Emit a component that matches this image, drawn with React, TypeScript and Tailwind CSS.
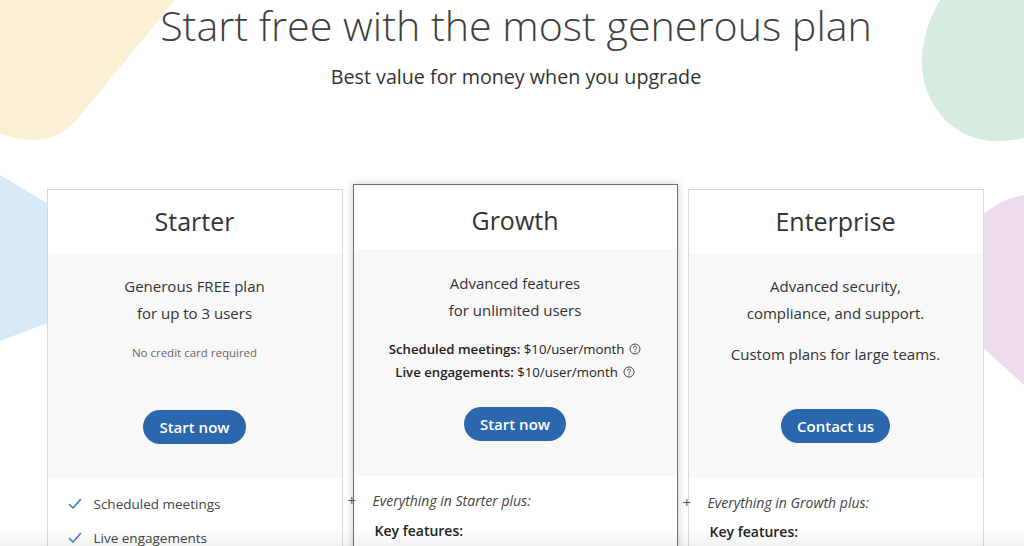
import React from "react";

const font = { fontFamily: '"Open Sans", "Noto Sans", sans-serif' };

function Blobs() {
  return (
    <svg
      className="absolute inset-0 w-[1024px] h-[546px] pointer-events-none"
      viewBox="0 0 1024 546"
      aria-hidden="true"
    >
      <path d="M0 0 L175 0 L80 116 C66 133 50 140 33 140 C20 140 10 137 0 133 Z" fill="#fbf0d4" />
      <path d="M0 175 L90 229 L90 307 L0 341 Z" fill="#d7eaf7" />
      <path d="M940 0 C928 20 921 45 922 65 C924 110 958 141 995 141 C1005 141 1015 140 1024 138 L1024 0 Z" fill="#d6ecdf" />
      <path d="M970 228 C988 207 1005 198 1024 195 L1024 385 L970 336 Z" fill="#ecdcee" />
    </svg>
  );
}

function Check() {
  return (
    <svg width="14" height="12" viewBox="0 0 14 12" className="shrink-0">
      <path d="M1.5 6.5 L5 10 L12.5 1.5" fill="none" stroke="#3b7bc6" strokeWidth="1.6" strokeLinecap="round" strokeLinejoin="round" />
    </svg>
  );
}

function Help() {
  return (
    <svg width="12" height="12" viewBox="0 0 12 12" className="inline-block ml-[5px] -mt-[3px]">
      <circle cx="6" cy="6" r="5" fill="none" stroke="#444" strokeWidth="1" />
      <path d="M4.4 4.7 C4.4 3.7 5.1 3.2 6 3.2 C6.9 3.2 7.6 3.8 7.6 4.6 C7.6 5.6 6.1 5.7 6.1 7" fill="none" stroke="#444" strokeWidth="1" strokeLinecap="round" />
      <circle cx="6.1" cy="8.7" r="0.6" fill="#444" />
    </svg>
  );
}

function Button({ label }: { label: string }) {
  return (
    <button className="h-[34px] px-4 rounded-full bg-[#2b67af] text-white text-[15px] font-semibold leading-none">
      {label}
    </button>
  );
}

function PlusRow({ text }: { text: string }) {
  return (
    <div className="relative pl-[19px] text-[14px] italic text-[#444] leading-[20px]">
      <span className="absolute left-[-6px] top-0 not-italic text-[#555] text-[15px] leading-[19px]">+</span>
      {text}
    </div>
  );
}

export default function App() {
  return (
    <div style={font} className="relative w-[1024px] h-[546px] overflow-hidden bg-white text-[#333]">
      <Blobs />

      <div className="relative flex flex-col items-center pl-[8px]">
        <h1 className="mt-[2px] text-[41.2px] font-light leading-[46px] text-[#3f3f3f]">
          Start free with the most generous plan
        </h1>
        <p className="mt-[16px] text-[19.7px] leading-[26px] text-[#333]">Best value for money when you upgrade</p>

        <div className="mt-[94px] flex items-start gap-[10px] pr-[2px]">
          {/* Starter */}
          <div className="mt-[5px] w-[296px] h-[400px] border border-[#d8d8d8] bg-white">
            <div className="h-[64px] flex items-center justify-center text-[25px] text-[#333]">Starter</div>
            <div className="h-[224px] bg-[#f8f8f8] flex flex-col items-center pt-[19px] text-[15px] leading-[27px]">
              <div>Generous FREE plan</div>
              <div>for up to 3 users</div>
              <div className="mt-[17px] text-[11.5px] leading-[18px] text-[#666]">No credit card required</div>
              <div className="mt-[48px]">
                <Button label="Start now" />
              </div>
            </div>
            <div className="pl-[20px] pt-[17px] flex flex-col gap-[16px] text-[13.5px] leading-[18px] text-[#444]">
              <div className="flex items-center gap-[12px]">
                <Check />
                <span>Scheduled meetings</span>
              </div>
              <div className="flex items-center gap-[12px]">
                <Check />
                <span>Live engagements</span>
              </div>
            </div>
          </div>

          {/* Growth */}
          <div className="w-[325px] h-[420px] border border-[#6f6f6f] bg-white shadow-[0_0_8px_rgba(0,0,0,0.22)]">
            <div className="h-[64px] pt-[8px] flex items-center justify-center text-[25px] text-[#333]">Growth</div>
            <div className="h-[227px] bg-[#f8f8f8] flex flex-col items-center pt-[21px] text-[15px] leading-[27px]">
              <div>Advanced features</div>
              <div>for unlimited users</div>
              <div className="mt-[14px] text-[13.2px] leading-[23px] text-[#222] text-center">
                <div>
                  <span className="font-semibold">Scheduled meetings:</span> $10/user/month
                  <Help />
                </div>
                <div>
                  <span className="font-semibold">Live engagements:</span> $10/user/month
                  <Help />
                </div>
              </div>
              <div className="mt-[23px]">
                <Button label="Start now" />
              </div>
            </div>
            <div className="pt-[15px]">
              <PlusRow text="Everything in Starter plus:" />
              <div className="mt-[10px] pl-[21px] text-[14px] font-semibold leading-[20px] text-[#222]">Key features:</div>
            </div>
          </div>

          {/* Enterprise */}
          <div className="mt-[5px] w-[296px] h-[400px] border border-[#d8d8d8] bg-white">
            <div className="h-[64px] flex items-center justify-center text-[25px] text-[#333]">Enterprise</div>
            <div className="h-[224px] bg-[#f8f8f8] flex flex-col items-center pt-[19px] text-[15px] leading-[27px]">
              <div>Advanced security,</div>
              <div>compliance, and support.</div>
              <div className="mt-[14px]">Custom plans for large teams.</div>
              <div className="mt-[41px]">
                <Button label="Contact us" />
              </div>
            </div>
            <div className="pt-[15px]">
              <PlusRow text="Everything in Growth plus:" />
              <div className="mt-[9px] pl-[21px] text-[14px] font-semibold leading-[20px] text-[#222]">Key features:</div>
            </div>
          </div>
        </div>
      </div>

      <div className="absolute left-0 right-0 bottom-0 h-[18px] bg-gradient-to-b from-transparent to-[rgba(0,0,0,0.05)] pointer-events-none" />
    </div>
  );
}
